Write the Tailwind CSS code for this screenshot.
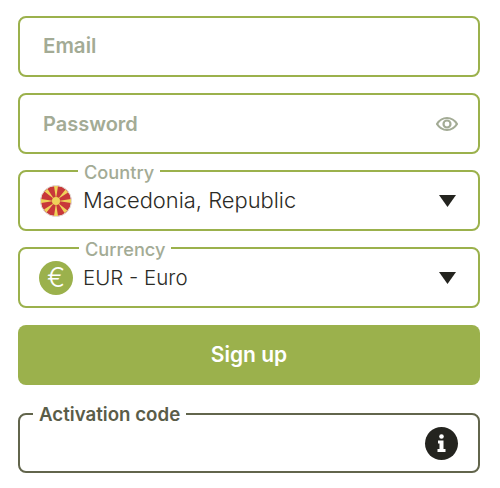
<!DOCTYPE html>
<html lang="en">
<head>
    <meta charset="UTF-8">
    <title>Sign up</title>
    <script src="https://cdn.jsdelivr.net/npm/@tailwindcss/browser@4"></script>
</head>
<body class="bg-white font-['Inter',sans-serif]">
    <form class="w-[500px] h-[488px] overflow-hidden pl-[18px] pr-5 pt-4 flex flex-col">
        <!-- Email -->
        <div class="h-[61px] border-2 border-[#9bb14c] rounded-lg flex items-center pl-[23px]">
            <span class="-mt-[1px] text-[20.5px] font-semibold text-[#a3ab95]">Email</span>
        </div>

        <!-- Password -->
        <div class="h-[61px] mt-4 border-2 border-[#9bb14c] rounded-lg flex items-center justify-between pl-[23px] pr-[20px]">
            <span class="mt-[1px] text-[20px] font-semibold text-[#a3ab95]">Password</span>
            <svg width="22" height="16" viewBox="0 0 22 16" fill="none" stroke="#a3ab95" stroke-width="2.200">
                <path d="M1 8c2.500-4 6-6 10-6s7.500 2 10 6c-2.500 4-6 6-10 6s-7.500-2-10-6z"/>
                <circle cx="11" cy="8" r="3.500"/>
            </svg>
        </div>

        <!-- Country -->
        <div class="relative h-[61px] mt-4 border-2 border-[#9bb14c] rounded-lg flex items-center pl-5 pr-[22px]">
            <span class="absolute -top-[8px] left-[58px] bg-white px-[6px] text-[18.2px] leading-[16px] font-medium text-[#a3ab95]">Country</span>
            <svg class="mt-[1px]" width="32" height="32" viewBox="-16 -16 32 32">
                <circle r="15.500" fill="#c8383a" stroke="#e4e4dc"/>
                <path fill="#efd25a" d="M-2 -15h4l-2 13zM-2 15h4l-2-13zM-15 -2v4l13-2zM15 -2v4l-13-2zM-11.500 -9.500l3-2.500 6.500 10zM11.500 9.500l-3 2.500-6.500-10zM9.500 -11.500l2.500 3-10 6.500zM-9.500 11.500l-2.500-3 10-6.500z"/>
                <circle r="4" fill="#efd25a"/>
            </svg>
            <span class="ml-[11px] text-[21.900px] font-light text-[#2b2b26]">Macedonia, Republic</span>
            <svg class="ml-auto" width="17" height="12" viewBox="0 0 17 12"><path d="M0 0h17l-8.500 12z" fill="#24241f"/></svg>
        </div>

        <!-- Currency -->
        <div class="relative h-[61px] mt-4 border-2 border-[#9bb14c] rounded-lg flex items-center pl-[19px] pr-[22px]">
            <span class="absolute -top-[8px] left-[59px] bg-white px-[6px] text-[18.2px] leading-[16px] font-medium text-[#a3ab95]">Currency</span>
            <div class="w-[34px] h-[34px] rounded-full bg-[#9bb14c] flex items-center justify-center text-white text-[27px] font-light leading-none">€</div>
            <span class="ml-[10px] mt-[1px] text-[20.5px] font-light text-[#2b2b26]">EUR - Euro</span>
            <svg class="ml-auto" width="17" height="12" viewBox="0 0 17 12"><path d="M0 0h17l-8.500 12z" fill="#24241f"/></svg>
        </div>

        <!-- Submit -->
        <button type="button" class="h-[60px] mt-[17px] rounded-lg bg-[#9bb14c] text-white text-[21px] font-semibold">Sign up</button>

        <!-- Activation code -->
        <div class="relative h-[60px] mt-7 border-2 border-[#62654c] rounded-lg flex items-center justify-end pr-5">
            <span class="absolute -top-[9px] left-[13px] bg-white px-[6px] text-[18.7px] leading-[18px] font-semibold text-[#5a5d48]">Activation code</span>
            <div class="w-[33px] h-[33px] rounded-full bg-[#24241f] flex items-center justify-center">
                <svg width="9" height="18" viewBox="0 0 9 18" fill="#fff"><circle cx="4.500" cy="2.500" r="2.300"/><path d="M1 6.500h5.500v8.500h2v3H.5v-3h2v-5.500H1z"/></svg>
            </div>
        </div>
    </form>
</body>
</html>
